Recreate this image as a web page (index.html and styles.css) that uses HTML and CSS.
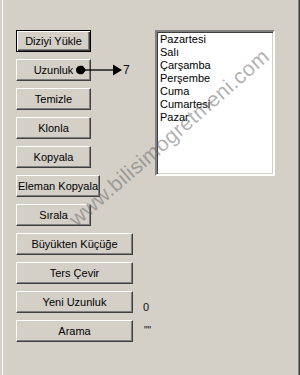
FILE: index.html
```html
<!DOCTYPE html>
<html lang="tr">

<head>
    <meta charset="UTF-8">
    <meta name="viewport" content="width=device-width, initial-scale=1.0">
    <title>Dizi İşlemleri</title>

    <link rel="stylesheet" href="styles.css">
</head>

<body>
    <!-- form penceresi -->
    <div class="window">
        <div class="form">
            <!-- sol taraf: butonlar -->
            <div class="buttons">
                <div class="row">
                    <button class="btn btn-default">Diziyi Yükle</button>
                </div>
                <div class="row">
                    <button class="btn">Uzunluk</button>
                    <svg class="arrow" width="47" height="12" viewBox="0 0 47 12">
                        <path d="M1 6 C1 2 5 1 8 2 L11 6 L8 10 C5 11 1 10 1 6 Z" fill="#000" />
                        <line x1="10" y1="6" x2="39" y2="6" stroke="#000" stroke-width="1.3" />
                        <path d="M38 0.5 L47 6 L38 11.5 Z" fill="#000" />
                    </svg>
                    <span class="label label-len">7</span>
                </div>
                <div class="row">
                    <button class="btn">Temizle</button>
                </div>
                <div class="row">
                    <button class="btn">Klonla</button>
                </div>
                <div class="row">
                    <button class="btn">Kopyala</button>
                </div>
                <div class="row">
                    <button class="btn btn-mid">Eleman Kopyala</button>
                </div>
                <div class="row">
                    <button class="btn">Sırala</button>
                </div>
                <div class="row">
                    <button class="btn btn-wide">Büyükten Küçüğe</button>
                </div>
                <div class="row">
                    <button class="btn btn-wide">Ters Çevir</button>
                </div>
                <div class="row">
                    <button class="btn btn-wide">Yeni Uzunluk</button>
                    <span class="label label-new">0</span>
                </div>
                <div class="row">
                    <button class="btn btn-wide">Arama</button>
                    <span class="label label-search">&quot;&quot;</span>
                </div>
            </div>

            <!-- sağ taraf: liste kutusu -->
            <ul class="listbox">
                <li>Pazartesi</li>
                <li>Salı</li>
                <li>Çarşamba</li>
                <li>Perşembe</li>
                <li>Cuma</li>
                <li>Cumartesi</li>
                <li>Pazar</li>
            </ul>
        </div>

        <!-- filigran -->
        <div class="watermark">www.bilisimogretmeni.com</div>
    </div>
</body>

</html>
```

FILE: styles.css
```css
* {
    margin: 0;
    padding: 0;
    box-sizing: border-box;
}

body {
    width: 300px;
    height: 375px;
    overflow: hidden;
    font-family: "Liberation Sans", Arial, sans-serif;
    font-size: 11px;
    color: #000;
}

.window {
    position: relative;
    width: 300px;
    height: 375px;
    background-color: #d4d0c8;
    /* pencere kenarları */
    box-shadow: inset 2px 0 #d4d0c8, inset 3px 0 #fff, inset -1px 0 #404040, inset -2px 0 #808080;
    overflow: hidden;
}

.form {
    display: flex;
    padding: 30px 0 0 16px;
}

.buttons {
    width: 139px;
    display: flex;
    flex-direction: column;
    gap: 7px;
}

.row {
    position: relative;
    display: flex;
    height: 22px;
}

.btn {
    width: 75px;
    height: 22px;
    font-family: "Liberation Sans", Arial, sans-serif;
    font-size: 11px;
    color: #000;
    background-color: #d4d0c8;
    border: 1px solid;
    border-color: #fff #404040 #404040 #fff;
    box-shadow: inset -1px -1px #808080;
    text-align: center;
    line-height: 18px;
}

.btn-default {
    border: 1px solid #000;
    box-shadow: inset 1px 1px #fff, inset -1px -1px #404040, inset -2px -2px #808080;
}

.btn-mid {
    width: 84px;
}

.btn-wide {
    width: 117px;
}

/* uzunluk oku */
.arrow {
    position: absolute;
    left: 59px;
    top: 5px;
}

.label {
    line-height: 14px;
    color: #111;
}

.label-len {
    margin-left: 32px;
    padding-top: 4px;
    font-size: 12px;
}

.label-new {
    margin-left: 10px;
    padding-top: 9px;
}

.label-search {
    margin-left: 11px;
    padding-top: 4px;
    font-size: 10px;
}

.listbox {
    list-style: none;
    width: 120px;
    height: 146px;
    background-color: #fff;
    border: 2px solid;
    border-color: #808080 #fff #fff #808080;
    box-shadow: inset 1px 1px #404040, inset -1px -1px #d4d0c8;
    padding: 1px 0 0 3px;
}

.listbox li {
    line-height: 13px;
    font-size: 11px;
}

.watermark {
    position: absolute;
    left: 80px;
    top: 207px;
    font-family: "Liberation Sans", Arial, sans-serif;
    font-size: 21px;
    letter-spacing: 0.4px;
    color: rgba(100, 100, 100, 0.5);
    transform: rotate(-41deg);
    transform-origin: left bottom;
    white-space: nowrap;
    pointer-events: none;
}
```
